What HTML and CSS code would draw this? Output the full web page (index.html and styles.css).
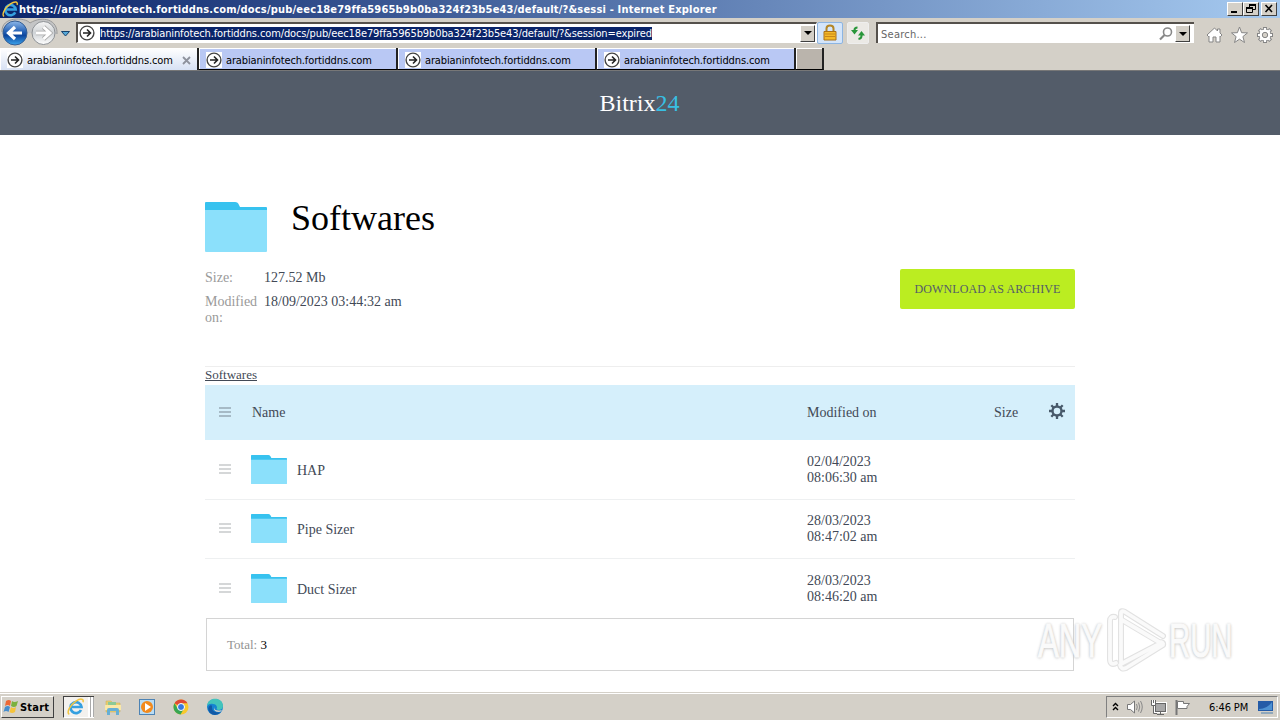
FILE: index.html
```html
<!DOCTYPE html>
<html lang="en">
<head>
    <meta charset="utf-8">
    <title>Bitrix24</title>
    <link rel="stylesheet" href="styles.css">
</head>
<body>
    <svg class="defs" width="0" height="0">
        <linearGradient id="blue" x1="0" y1="0" x2="0" y2="1"><stop offset="0" stop-color="#8fb9ea"/><stop offset=".45" stop-color="#2460b4"/><stop offset=".6" stop-color="#0d469d"/><stop offset="1" stop-color="#3ca5ed"/></linearGradient>
        <linearGradient id="grey" x1="0" y1="0" x2="0" y2="1"><stop offset="0" stop-color="#f5f5f5"/><stop offset=".5" stop-color="#cfd3d6"/><stop offset="1" stop-color="#fff"/></linearGradient>
        <symbol id="arrow" viewBox="0 0 16 16"><rect width="16" height="16" fill="#fff"/><circle cx="8" cy="8" r="6.900" fill="#fff" stroke="#444" stroke-width="1.400"/><path d="M4 8h7.500M8 4.500L11.500 8 8 11.500" fill="none" stroke="#222" stroke-width="1.600"/></symbol>
        <symbol id="folder" viewBox="0 0 62 50"><path d="M0 1Q0 0 1 0H30Q33 0 34 3L35 5H61Q62 5 62 6V12H0Z" fill="#37c2ef"/><path d="M0 8H62V49Q62 50 61 50H1Q0 50 0 49Z" fill="#8be0fb"/></symbol>
        <symbol id="ie" viewBox="0 0 18 18"><path d="M14 12A5.500 5.500 0 1 1 14.500 9H5" fill="none" stroke="#35a0e0" stroke-width="2.700"/><path d="M2.300 16.200C-1 15 3 7 9 3.100 13 .4 17.200 .2 16 4.200" fill="none" stroke="#f3c53d" stroke-width="1.500"/></symbol>
        <symbol id="lines" viewBox="0 0 12 10"><path d="M0 1H12M0 5H12M0 9H12" stroke="currentColor" stroke-width="1.400"/></symbol>
    </svg>

    <div class="titlebar">
        <svg class="title-icon" width="17" height="17"><use href="#ie"/></svg>
        <span class="title-text">https://arabianinfotech.fortiddns.com/docs/pub/eec18e79ffa5965b9b0ba324f23b5e43/default/?&amp;sessi - Internet Explorer</span>
        <div class="window-buttons">
            <span class="win-btn"><svg width="14" height="11"><path d="M3 9H9" stroke="#000" stroke-width="2"/></svg></span>
            <span class="win-btn"><svg width="14" height="11"><path d="M5.500 4V1.500H11.500V6.500H9M2.500 4.500H8.500V9.500H2.500Z" fill="none" stroke="#000"/><path d="M5 2H12M2 5H9" stroke="#000" stroke-width="2"/></svg></span>
            <span class="win-btn close"><svg width="14" height="11"><path d="M3.500 2L10 9M10 2L3.500 9" stroke="#000" stroke-width="1.600"/></svg></span>
        </div>
    </div>

    <div class="toolbar">
        <svg class="nav" width="74" height="29" viewBox="0 0 74 29">
            <path d="M2 14C1-2 25-1 30 5 43-3 58 2 57 16" fill="#c4c5c6" stroke="#999"/>
            <circle cx="43.500" cy="15" r="11.500" fill="url(#grey)" stroke="#8d9195"/>
            <path d="M36 15H49M43.500 9L50 15 43.500 21" fill="none" stroke="#aaa" stroke-width="4.500"/>
            <path d="M36 15H49M43.500 9L50 15 43.500 21" fill="none" stroke="#fff" stroke-width="3"/>
            <circle cx="15" cy="15" r="12" fill="url(#blue)" stroke="#355e94"/>
            <path d="M22 15H9M15 9L8.500 15 15 21" fill="none" stroke="#fff" stroke-width="3.200"/>
            <path d="M61.500 13.500H69.500L65.500 18Z" fill="#56a9d8" stroke="#17436d"/>
        </svg>
        <div class="address">
            <svg width="16" height="16"><use href="#arrow"/></svg>
            <span class="url">https://arabianinfotech.fortiddns.com/docs/pub/eec18e79ffa5965b9b0ba324f23b5e43/default/?&amp;session=expired</span>
            <span class="drop"></span>
        </div>
        <div class="tool lock"><svg width="16" height="18" viewBox="0 0 16 18"><path d="M4.500 8V4.500Q4.500 1.500 8 1.500T11.500 4.500V8" fill="none" stroke="#b48626" stroke-width="2"/><path d="M2 7.500H14V16H2Z" fill="#f4b929" stroke="#a9711b"/><path d="M3 10H13M3 12.500H13" stroke="#c9871b"/></svg></div>
        <div class="tool refresh"><svg width="16" height="16" viewBox="0 0 16 16"><path d="M7.500 2.500Q4.500 2.500 4.500 5V6M8.500 14Q11.500 13.500 11.500 11V9" fill="none" stroke="#28963a" stroke-width="2"/><path d="M1 5H8L4.500 9.500ZM8 10.500H15L11.500 6Z" fill="#28963a"/></svg></div>
        <div class="search">
            <span class="search-text">Search...</span>
            <svg width="14" height="14" viewBox="0 0 14 14"><circle cx="8.500" cy="5" r="4" fill="none" stroke="#888" stroke-width="1.600"/><path d="M5.500 8L1 12.500" stroke="#888" stroke-width="2.200"/></svg>
            <span class="drop"></span>
        </div>
        <div class="tool-icons">
            <svg width="17" height="18" viewBox="0 0 17 18"><path d="M1 9L8.500 2 11.500 5V3H14V7L16 9 14.500 10.500 14 10V16H10V11H7V16H3V10L2.500 10.500Z" fill="#fff" stroke="#858585"/></svg>
            <svg width="17" height="18" viewBox="0 0 17 18"><path d="M8.500 1L10.600 6.700 16.500 6.900 11.900 10.600 13.500 16.500 8.500 13.200 3.500 16.500 5.100 10.600 .5 6.900 6.400 6.700Z" fill="#fff" stroke="#858585"/></svg>
            <svg width="18" height="18" viewBox="0 0 18 18"><g stroke="#858585" stroke-width="4"><path d="M9 1V17M1 9H17M3.300 3.300L14.700 14.700M14.700 3.300L3.300 14.700"/></g><circle cx="9" cy="9" r="6" fill="#fff" stroke="#858585"/><path d="M9 2V16M2 9H16M4 4L14 14M14 4L4 14" stroke="#fff" stroke-width="2.200"/><circle cx="9" cy="9" r="2.700" fill="#d4d0c8" stroke="#858585"/></svg>
        </div>
    </div>

    <div class="tabs">
        <div class="tab active"><svg width="16" height="16"><use href="#arrow"/></svg><span>arabianinfotech.fortiddns.com</span><svg class="tab-close" width="9" height="9"><path d="M1 1L8 8M8 1L1 8" stroke="#8e929d" stroke-width="1.800"/></svg></div>
        <div class="tab"><svg width="16" height="16"><use href="#arrow"/></svg><span>arabianinfotech.fortiddns.com</span></div>
        <div class="tab"><svg width="16" height="16"><use href="#arrow"/></svg><span>arabianinfotech.fortiddns.com</span></div>
        <div class="tab"><svg width="16" height="16"><use href="#arrow"/></svg><span>arabianinfotech.fortiddns.com</span></div>
        <div class="tab new-tab"></div>
    </div>

    <div class="page">
        <div class="header">Bitrix<span>24</span></div>
        <div class="content">
            <div class="heading">
                <svg width="62" height="50"><use href="#folder"/></svg>
                <h1>Softwares</h1>
            </div>
            <div class="info">
                <dl>
                    <dt>Size:</dt><dd>127.52 Mb</dd>
                    <dt>Modified on:</dt><dd>18/09/2023 03:44:32 am</dd>
                </dl>
                <button class="download">DOWNLOAD AS ARCHIVE</button>
            </div>
            <div class="crumbs"><a>Softwares</a></div>
            <div class="grid-row grid-head">
                <svg class="lines" width="12" height="10"><use href="#lines"/></svg>
                <span class="name">Name</span>
                <span class="date">Modified on</span>
                <span class="size">Size</span>
                <svg class="gear" width="16" height="16" viewBox="0 0 16 16"><circle cx="8" cy="8" r="4.500" fill="none" stroke="#47596a" stroke-width="2.400"/><path d="M8 0V3M8 13V16M0 8H3M13 8H16M2.300 2.300L4.500 4.500M11.500 11.500L13.700 13.700M13.700 2.300L11.500 4.500M4.500 11.500L2.300 13.700" stroke="#47596a" stroke-width="2.300"/></svg>
            </div>
            <div class="grid-row">
                <svg class="lines" width="12" height="10"><use href="#lines"/></svg>
                <span class="name"><svg width="36" height="29"><use href="#folder"/></svg><span>HAP</span></span>
                <span class="date">02/04/2023<br>08:06:30 am</span>
            </div>
            <div class="grid-row">
                <svg class="lines" width="12" height="10"><use href="#lines"/></svg>
                <span class="name"><svg width="36" height="29"><use href="#folder"/></svg><span>Pipe Sizer</span></span>
                <span class="date">28/03/2023<br>08:47:02 am</span>
            </div>
            <div class="grid-row last">
                <svg class="lines" width="12" height="10"><use href="#lines"/></svg>
                <span class="name"><svg width="36" height="29"><use href="#folder"/></svg><span>Duct Sizer</span></span>
                <span class="date">28/03/2023<br>08:46:20 am</span>
            </div>
            <div class="total">Total: <b>3</b></div>
        </div>
        <div class="watermark">
            <span>ANY</span>
            <svg width="60" height="64" viewBox="0 0 60 64"><g fill="none" stroke-linejoin="round" stroke-linecap="round"><path d="M8 9Q3 8 3 13V51Q3 58 9 55M14 5V56L54 35M14 5Q14 2 18 4L56 28M15 12L52 34Q57 34 56 37L19 60Q14 62 13 57" stroke="#e2e2e2" stroke-width="6"/><path d="M8 9Q3 8 3 13V51Q3 58 9 55M14 5V56L54 35M14 5Q14 2 18 4L56 28M15 12L52 34Q57 34 56 37L19 60Q14 62 13 57" stroke="#fafafa" stroke-width="3.800"/></g></svg>
            <span class="run">RUN</span>
        </div>
    </div>

    <div class="taskbar">
        <div class="start"><svg width="16" height="16" viewBox="0 0 16 16"><path d="M3 2Q6 0 8 2L7 7Q5 5 2 7Z" fill="#ed6835"/><path d="M9 2Q11 4 15 2L13.500 7Q11 9 8 7Z" fill="#7bb13d"/><path d="M2 8Q5 6 7 8L5.500 13Q3 11 .5 13Z" fill="#468dcd"/><path d="M8 8Q10 10 13 8L12 13Q9 15 6.500 13Z" fill="#f5c33b"/></svg>Start</div>
        <div class="task-ie"><svg width="18" height="18"><use href="#ie"/></svg></div>
        <div class="launch">
            <svg width="18" height="18" viewBox="0 0 18 18"><path d="M2 3H7L9 5H16V14H2Z" fill="#e8cd70" stroke="#cfac50" stroke-width=".5"/><path d="M4 4H12V7H4Z" fill="#8bc996"/><path d="M1 7H17V12H1Z" fill="#fae8a7"/><path d="M3 17V12Q3 10 5 10H13Q15 10 15 12V17H12V13H6V17Z" fill="#67afd5"/></svg>
            <svg width="18" height="18" viewBox="0 0 18 18"><rect x="1.500" y="1.500" width="15" height="15" fill="#b9dcf4" stroke="#4d83b4"/><circle cx="9" cy="9" r="6" fill="#f28a1d"/><path d="M7 5L13 9 7 13Z" fill="#fff"/></svg>
            <svg width="18" height="18" viewBox="0 0 18 18"><circle cx="9" cy="9" r="7.500" fill="#f8c92d"/><path d="M9 9L2.500 5.200A7.500 7.500 0 0 1 15.500 5.200H9Z" fill="#df4935"/><path d="M2.500 5.200A7.500 7.500 0 0 0 8.500 16.500L12 10.500 9 9 5.800 10.800Z" fill="#38a653"/><circle cx="9" cy="9" r="3.500" fill="#3779df" stroke="#fff"/></svg>
            <svg width="18" height="18" viewBox="0 0 18 18"><circle cx="9" cy="9" r="8" fill="#1583d1"/><path d="M1 8C2-2 17-1 17 8 17 12 12 13 10.500 11 12 9 10 6 7 6 4 5 2 7 1 8Z" fill="#43c4bb"/><path d="M6 8Q5 15 15 14.500 9 19 4 15 0 9 5 7Z" fill="#1259a6"/><path d="M8 9Q8 13 14 12.500L16 12Q15 14 13 14 7 14 8 9" fill="#d4d0c8"/></svg>
        </div>
        <div class="tray">
            <svg width="7" height="10"><path d="M1 4L3.500 1.500 6 4M1 8L3.500 5.500 6 8" fill="none" stroke="#000" stroke-width="1.400"/></svg>
            <svg width="17" height="16" viewBox="0 0 17 16"><path d="M1.500 5.500H4.500L8.500 2V14L4.500 10.500H1.500Z" fill="#fff" stroke="#777"/><path d="M10.500 5Q12 8 10.500 11M12.500 3.500Q15 8 12.500 12.500M14.500 2Q18 8 14.500 14" fill="none" stroke="#888"/></svg>
            <svg width="17" height="17" viewBox="0 0 17 17"><rect x="5.500" y="4.500" width="10" height="8" fill="#a8a8a8" stroke="#fff" stroke-width="3"/><rect x="5.500" y="4.500" width="10" height="8" fill="#a8a8a8" stroke="#666"/><path d="M7 15.500H14M10.500 13V15M3.500 7V14.500H7" fill="none" stroke="#666"/><path d="M1.500 1V6.500H5.500V1M3.500 1V4" fill="#fff" stroke="#666"/></svg>
            <svg width="17" height="17" viewBox="0 0 17 17"><path d="M2.500 16V1" stroke="#777" stroke-width="2"/><path d="M3.500 2.500H9.500V4.500H15.500L13 7.500V9.500H3.500Z" fill="#fff" stroke="#777"/></svg>
            <span class="clock">6:46 PM</span>
            <svg width="16" height="15" viewBox="0 0 16 15"><path d="M0 1H15V11H0Z" fill="#245ba7"/><path d="M1 9Q9 9 14 2V10H1Z" fill="#4d91d2"/><path d="M3 13H15" stroke="#90a8bc" stroke-width="2"/></svg>
        </div>
    </div>
</body>
</html>
```

FILE: styles.css
```css
* {
    box-sizing: border-box;
}
body {
    margin: 0;
    width: 1280px;
    height: 720px;
    overflow: hidden;
    display: flex;
    flex-direction: column;
    background: #d4d0c8;
    font-family: "DejaVu Sans Condensed", "DejaVu Sans", sans-serif;
    font-stretch: condensed;
    font-size: 11px;
    color: #000;
}
svg {
    display: block;
    flex: none;
}
.defs {
    position: absolute;
}
.titlebar {
    height: 18px;
    flex: none;
    display: flex;
    align-items: center;
    padding-left: 2px;
    background: linear-gradient(to right, #0a246a, #a6caf0);
    color: #fff;
    font-weight: bold;
}
.title-text {
    white-space: nowrap;
    letter-spacing: 0.19px;
}
.window-buttons {
    display: flex;
    margin: 0 3px 0 auto;
}
.win-btn {
    width: 16px;
    height: 14px;
    background: #d4d0c8;
    border: 1px solid;
    border-color: #fff #404040 #404040 #fff;
}
.close {
    margin-left: 2px;
}
.toolbar {
    height: 29px;
    flex: none;
    display: flex;
    padding-top: 4px;
}
.nav {
    margin-top: -4px;
}
.address {
    display: flex;
    align-items: center;
    width: 741px;
    height: 21px;
    margin-left: 2px;
    padding-left: 1px;
    background: #fff;
    border: 1px solid #fff;
    border-top: 2px solid #55514c;
    border-left: 2px solid #55514c;
}
.url {
    margin-left: 5px;
    background: #0a246a;
    color: #fff;
    line-height: 13px;
    white-space: nowrap;
    letter-spacing: -0.115px;
}
.drop {
    display: flex;
    align-items: center;
    justify-content: center;
    width: 15px;
    height: 17px;
    margin-left: auto;
    margin-right: 1px;
    background: #d4d0c8;
    border: 1px solid;
    border-color: #fff #404040 #404040 #fff;
}
.drop::after {
    content: "";
    border: 4px solid transparent;
    border-top-color: #000;
    border-bottom: 0;
}
.tool {
    display: flex;
    align-items: center;
    justify-content: center;
    height: 22px;
    border: 1px solid #eee;
    border-radius: 2px;
}
.lock {
    width: 26px;
    background: #d4e5fa;
    border-color: #8db5e2;
}
.refresh {
    width: 22px;
    margin-left: 4px;
    background: #ebe9e5;
}
.search {
    display: flex;
    align-items: center;
    width: 318px;
    height: 21px;
    margin-left: 7px;
    padding: 0 3px 0 3px;
    background: #fff;
    border-top: 2px solid #55514c;
    border-left: 2px solid #55514c;
}
.search-text {
    padding-top: 1px;
    color: #666;
    letter-spacing: 0.25px;
}
.search svg {
    margin-left: auto;
}
.search .drop {
    margin-left: 2px;
}
.tool-icons {
    display: flex;
    gap: 8px;
    margin: 4px 0 0 12px;
}
.tabs {
    display: flex;
    height: 24px;
    flex: none;
    padding-top: 1px;
    border-bottom: 1px solid #777;
}
.tab {
    display: flex;
    align-items: center;
    gap: 4px;
    width: 199px;
    height: 22px;
    padding: 2px 0 0 7px;
    background: #b9c8f4;
    border-right: 2px solid #222;
    border-bottom: 1px solid #000;
    box-shadow: inset 1px 1px #fff;
    letter-spacing: -0.13px;
}
.tab span {
    padding-top: 1px;
}
.tab.active {
    background: linear-gradient(#fff, #d7e1f4);
    border-bottom: 0;
}
.tab-close {
    margin-left: 5px;
}
.tab.new-tab {
    width: 28px;
    background: #bab4ac;
}
.page {
    position: relative;
    height: 621px;
    flex: none;
    background: #fff;
    font-family: "Liberation Serif", serif;
    font-stretch: normal;
    color: #424956;
    font-size: 14px;
    line-height: 16px;
}
.header {
    height: 64px;
    padding-right: 1px;
    background: #535c69;
    color: #fff;
    font-size: 24px;
    line-height: 64px;
    text-align: center;
}
.header span {
    color: #38bfe3;
}
.content {
    width: 870px;
    margin: 0 auto;
    padding-top: 67px;
}
.heading {
    display: flex;
    gap: 24px;
    height: 67px;
}
h1 {
    margin: 0;
    color: #000;
    font-size: 36px;
    font-weight: normal;
    line-height: 33px;
}
.info {
    display: flex;
    justify-content: space-between;
    height: 97px;
}
dl {
    display: grid;
    grid-template-columns: 59px 160px;
    align-content: start;
    row-gap: 8px;
    margin: 0;
    padding-top: 1px;
}
dt {
    width: 54px;
    color: #9a9a9a;
}
dd {
    margin: 0;
}
.download {
    width: 175px;
    height: 40px;
    padding: 0;
    border: 0;
    border-radius: 2px;
    background: #bbed21;
    color: #535c69;
    font: 12px "Liberation Serif", serif;
    letter-spacing: 0.1px;
}
.crumbs {
    height: 19px;
    border-top: 1px solid #eee;
    font-size: 13px;
}
.crumbs a {
    text-decoration: underline;
}
.grid-row {
    display: flex;
    align-items: center;
    height: 59px;
    padding-left: 14px;
    border-bottom: 1px solid #eef0f1;
}
.grid-head + .grid-row {
    height: 60px;
}
.grid-row.last {
    border-bottom: 0;
}
.grid-row.last .date {
    padding-top: 1px;
}
.grid-row.grid-head {
    height: 55px;
    background: #d5effb;
    border: 0;
}
.lines {
    margin-bottom: 2px;
    color: #c7cacc;
}
.grid-head .lines {
    color: #96a9b5;
}
.gear {
    margin-bottom: 3px;
}
.name {
    display: flex;
    align-items: center;
    gap: 10px;
    width: 556px;
    margin-left: 20px;
}
.grid-row:not(.grid-head) .name {
    margin-bottom: 1px;
}
.name span {
    padding-top: 3px;
}
.grid-head .name {
    width: 555px;
    margin-left: 21px;
}
.date {
    width: 186px;
}
.grid-head .date {
    width: 187px;
}
.size {
    width: 55px;
}
.total {
    height: 53px;
    margin: 0 1px;
    padding-left: 20px;
    border: 1px solid #d4d4d4;
    color: #929292;
    font-size: 13px;
    line-height: 52px;
}
.total b {
    color: #000;
    font-weight: normal;
}
.watermark {
    position: absolute;
    left: 1038px;
    top: 537px;
    display: flex;
    align-items: center;
    gap: 6px;
}
.watermark span {
    width: 63px;
    color: #fafafa;
    font: 48px "Liberation Sans", sans-serif;
    transform: scaleX(0.65);
    transform-origin: left;
    text-shadow: 0 0 3px #bbb, 0 1px 4px #ccc;
    -webkit-text-stroke: 1px #fafafa;
}
.watermark .run {
    margin-left: -4px;
    transform: scaleX(0.61);
}
.taskbar {
    display: flex;
    align-items: center;
    height: 28px;
    flex: none;
    padding: 1px 2px 0 1px;
    border-top: 1px solid #d4d0c8;
    box-shadow: inset 0 1px #fff;
}
.start {
    display: flex;
    align-items: center;
    gap: 1px;
    width: 53px;
    height: 22px;
    padding-left: 1px;
    border: 1px solid;
    border-color: #fff #404040 #404040 #fff;
    font-weight: bold;
    letter-spacing: 0.2px;
}
.task-ie {
    width: 31px;
    height: 22px;
    margin-left: 9px;
    padding: 1px 0 0 3px;
    background: linear-gradient(to right, #f3f1ee 24px, #fff 24px, #fff 26px, #aaa 26px, #aaa 27px, #fff 27px, #fff 29px, #aaa 29px);
    border-top: 1px solid #404040;
    border-left: 1px solid #404040;
    border-bottom: 1px solid #fff;
}
.launch {
    display: flex;
    gap: 16px;
    margin-left: 10px;
}
.tray {
    display: flex;
    align-items: center;
    width: 172px;
    height: 22px;
    margin-left: auto;
    padding-left: 5px;
    gap: 7px;
    border: 1px solid;
    border-color: #808080 #fff #fff #808080;
}
.clock {
    width: 42px;
    margin: 0 0 0 11px;
    white-space: nowrap;
    letter-spacing: -0.1px;
}
```
